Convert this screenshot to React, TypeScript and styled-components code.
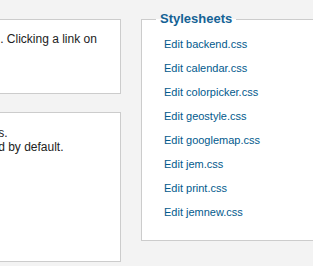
import styled, { createGlobalStyle } from "styled-components";

const GlobalStyle = createGlobalStyle`
  html, body {
    margin: 0;
    background: #f3f3f3;
    overflow: hidden;
  }
  body {
    font-family: "Liberation Sans", Arial, sans-serif;
  }
`;

const Page = styled.div`
  display: flex;
  align-items: flex-start;
  gap: 20px;
  margin-left: -259px;
  width: 700px;
`;

const Column = styled.div`
  flex: none;
  display: flex;
  flex-direction: column;
  gap: 18px;
  width: 380px;
  padding-top: 19px;
`;

const Panel = styled.div<{ $height: number; $padTop: number; $padLeft: number }>`
  box-sizing: border-box;
  height: ${(p) => p.$height}px;
  padding: ${(p) => p.$padTop}px 10px 0 ${(p) => p.$padLeft}px;
  background: #fff;
  border: 1px solid #ccc;
  font-size: 12px;
  line-height: 14px;
  color: #222;
`;

const Line = styled.p`
  margin: 0;
  white-space: nowrap;
`;

const Fieldset = styled.fieldset`
  flex: none;
  box-sizing: border-box;
  width: 260px;
  margin: 11px 0 0;
  padding: 4px 0 17px 14px;
  background: #fff;
  border: 1px solid #ccc;
`;

const Legend = styled.legend`
  padding: 0 4px;
  font-size: 13px;
  line-height: 16px;
  font-weight: bold;
  color: #146295;
`;

const FileList = styled.ul`
  list-style: none;
  margin: 0;
  padding: 0;
`;

const FileItem = styled.li`
  height: 24px;
  line-height: 24px;
  padding-left: 8px;
`;

const FileLink = styled.a`
  font-size: 11px;
  color: #025a8d;
  text-decoration: none;
`;

const files = [
  "backend.css",
  "calendar.css",
  "colorpicker.css",
  "geostyle.css",
  "googlemap.css",
  "jem.css",
  "print.css",
  "jemnew.css",
];

export default function App() {
  return (
    <>
      <GlobalStyle />
      <Page>
        <Column>
          <Panel $height={75} $padTop={12} $padLeft={8}>
            <Line>Here you can edit the stylesheets used by JEM. Clicking a link on</Line>
          </Panel>
          <Panel $height={150} $padTop={13} $padLeft={10}>
            <Line>These stylesheets are loaded on all JEM pages.</Line>
            <Line>Both print and jemnew stylesheets are not used by default.</Line>
          </Panel>
        </Column>
        <Fieldset>
          <Legend>Stylesheets</Legend>
          <FileList>
            {files.map((f) => (
              <FileItem key={f}>
                <FileLink href="#">Edit {f}</FileLink>
              </FileItem>
            ))}
          </FileList>
        </Fieldset>
      </Page>
    </>
  );
}
